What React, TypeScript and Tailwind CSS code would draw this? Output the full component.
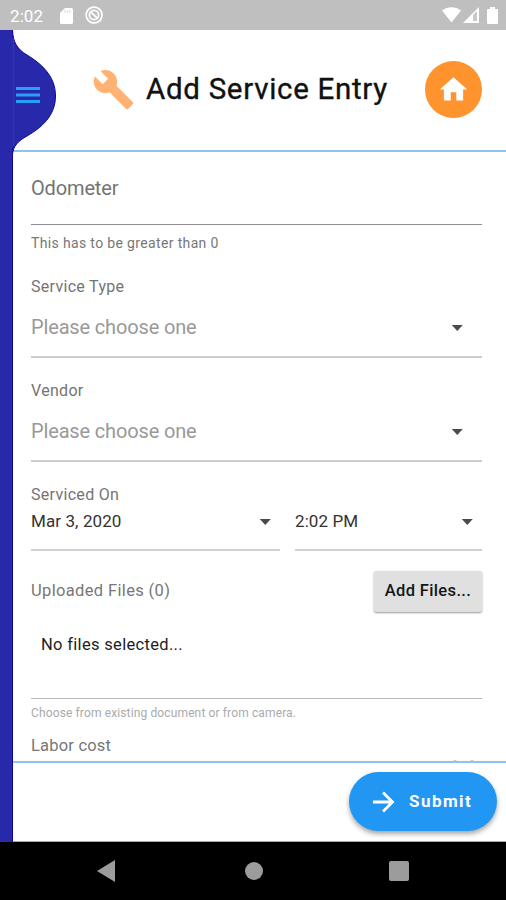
import type { ReactNode } from "react";
import { MdBuild, MdHome } from "react-icons/md";

function Caret({ className = "" }: { className?: string }) {
  return (
    <svg className={className} width="12" height="6" viewBox="0 0 12 6">
      <path d="M.8 0h11L6.300 6z" fill="#4a4a4a" />
    </svg>
  );
}

function StatusBar() {
  return (
    <div className="flex h-[30px] shrink-0 items-center bg-[#bfbfbf] pl-[10px] pr-2 text-white">
      <span className="w-[50px] text-[17px] leading-[30px] tracking-[0.1px] pt-[2px]">2:02</span>
      <svg width="13" height="16" viewBox="0 0 13 16" className="mt-px">
        <path
          d="M5 0h6.5A1.5 1.5 0 0 1 13 1.500v13A1.500 1.500 0 0 1 11.500 16h-10A1.500 1.500 0 0 1 0 14.500V5z"
          fill="#fff"
        />
        <path d="M5 2v3M7.500 2v3M10 2v3" stroke="#e2e2e2" strokeWidth="1.200" />
      </svg>
      <svg width="18" height="18" viewBox="0 0 18 18" className="ml-3" fill="none" stroke="#fff">
        <path d="M14.500 14.800A7.900 7.900 0 1 1 17 9c0 2-.6 3.500-2 6z" strokeWidth="1.700" />
        <circle cx="9" cy="9" r="4.600" strokeWidth="1.700" />
        <path d="M5.800 5.800l6.400 6.400" strokeWidth="1.800" />
      </svg>
      <div className="ml-auto flex items-center">
        <svg width="19" height="16" viewBox="0 0 19 16">
          <path d="M0 3.500C5.500-1 13.500-1 19 3.500L9.500 15.500z" fill="#fff" />
        </svg>
        <svg width="16" height="16" viewBox="0 0 16 16" className="ml-[2px]">
          <path d="M0 16L16 0v16z" fill="#fff" />
          <path d="M10 8l4-4v10h-4z" fill="#c9c9c9" />
        </svg>
        <svg width="11" height="17" viewBox="0 0 11 17" className="ml-2">
          <path d="M3 0h5v2h2a1 1 0 0 1 1 1v13a1 1 0 0 1-1 1H1a1 1 0 0 1-1-1V3a1 1 0 0 1 1-1h2z" fill="#fff" />
        </svg>
      </div>
    </div>
  );
}

function DrawerHandle() {
  return (
    <div className="relative z-10 w-[13px] shrink-0 border-r border-[#0a0a9c] bg-[#2729aa]">
      <svg className="absolute left-0 top-0" width="58" height="124" viewBox="0 0 58 124">
        <path
          d="M12.500 0C13 12 17 19 27 25C40 33 55.500 45 55.500 66C55.500 86 41 98 27 106C18 111 13.500 116 12.500 124z"
          fill="#2729aa"
        />
        <path
          d="M12.500 0C13 12 17 19 27 25C40 33 55.500 45 55.500 66C55.500 86 41 98 27 106C18 111 13.500 116 12.500 124"
          fill="none"
          stroke="#0a0a9c"
          strokeWidth="1"
        />
        <path d="M13 8v108" stroke="#4142b4" strokeWidth="1" />
        <path d="M16 58.500h24M16 65h24M16 71.500h24" stroke="#28a0fa" strokeWidth="2.800" />
      </svg>
    </div>
  );
}

function SelectField({ label, children }: { label: string; children: ReactNode }) {
  return (
    <div className="flex h-[104px] flex-col border-b-2 border-[#cdcdcd]">
      <div className="mt-[23px] text-[16px] leading-[20px] tracking-[0.3px] text-[#747474]">{label}</div>
      <div className="mt-[18px] flex items-center justify-between pr-[19px] text-[20px] leading-[24px] tracking-[-0.15px] text-[#999]">
        {children}
        <Caret className="mt-px" />
      </div>
    </div>
  );
}

export default function App() {
  return (
    <div className="flex h-[900px] w-[506px] flex-col overflow-hidden bg-white font-['Roboto',sans-serif]">
      <StatusBar />
      <div className="flex h-[812px] shrink-0">
        <DrawerHandle />
        <div className="flex w-[493px] flex-col">
          <header className="flex h-[122px] shrink-0 items-center border-b-2 border-[#94c1ec] pl-[79px] pr-[24px] pb-[2px]">
            <MdBuild className="size-[43px] text-[#ffb274]" />
            <h1 className="ml-[11px] whitespace-nowrap text-[29.500px] leading-9 tracking-[0.7px] text-[#111] [-webkit-text-stroke:0.35px_#111]">
              Add Service Entry
            </h1>
            <div className="ml-auto flex size-[57px] items-center justify-center rounded-full bg-[#ff932d]">
              <MdHome className="size-[33px] text-white" />
            </div>
          </header>

          <main className="h-[609px] shrink-0 overflow-hidden pl-[18px] pr-[24px]">
            <div className="h-[73px] border-b border-[#8f8f8f] pt-[24px] text-[20px] leading-[24px] tracking-[-0.15px] text-[#747474]">
              Odometer
            </div>
            <div className="h-[28px] pt-[9px] text-[14px] leading-[18px] tracking-[0.350px] text-[#777]">
              This has to be greater than 0
            </div>
            <div className="pt-px">
              <SelectField label="Service Type">Please choose one</SelectField>
              <SelectField label="Vendor">Please choose one</SelectField>
            </div>
            <div className="pt-[23px] text-[16px] leading-[20px] tracking-[0.3px] text-[#747474]">Serviced On</div>
            <div className="flex gap-[15px] text-[17px] leading-[20px] tracking-[0.1px] text-[#333]">
              <div className="flex h-[46px] w-[249px] items-start justify-between border-b-2 border-[#d0d0d0] pr-[9px] pt-[6px]">
                Mar 3, 2020
                <Caret className="mt-[8px]" />
              </div>
              <div className="flex h-[46px] flex-1 items-start justify-between border-b-2 border-[#d0d0d0] pr-[9px] pt-[6px]">
                2:02 PM
                <Caret className="mt-[8px]" />
              </div>
            </div>
            <div className="mt-[19px] flex h-[42px] items-center justify-between">
              <span className="text-[16.500px] tracking-[0.350px] text-[#777]">Uploaded Files (0)</span>
              <button className="h-[41px] w-[108px] rounded-[2px] bg-[#e0e0e0] text-[16.500px] font-medium tracking-[0.350px] text-[#161616] shadow-[0_1px_2px_rgba(0,0,0,0.4)]">
                Add Files...
              </button>
            </div>
            <div className="h-[87px] border-b border-[#b8b8b8] pl-[10px] pt-[22px] text-[16.500px] leading-[22px] tracking-[0.320px] text-[#1e1e1e]">
              No files selected...
            </div>
            <div className="pt-[6px] text-[12px] leading-[16px] tracking-[0.130px] text-[#aaa]">
              Choose from existing document or from camera.
            </div>
            <div className="flex justify-between pt-[14px] text-[16.500px] leading-[22px] tracking-[0.2px] text-[#777]">
              Labor cost
              <div className="mr-[8px] mt-[25px] flex gap-[13px]">
                <span className="h-[3px] w-[4px] rounded-t-full bg-[#c5c5c5]" />
                <span className="h-[3px] w-[4px] rounded-t-full bg-[#c5c5c5]" />
              </div>
            </div>
          </main>

          <footer className="flex h-[81px] shrink-0 items-start justify-end border-b border-t-2 border-b-[#aaa] border-t-[#94c1ec] pr-[9px] pt-[9px]">
            <button className="flex h-[59px] w-[148px] items-center rounded-full bg-[#2196f3] pl-[24px] text-white shadow-[0_3px_5px_rgba(0,0,0,0.35)]">
              <svg width="22" height="22" viewBox="0 0 22 22" fill="none" stroke="#fff" strokeWidth="2.800">
                <path d="M0 11h19M10 1.500l9.500 9.500L10 20.500" />
              </svg>
              <span className="ml-[14px] text-[17px] font-bold tracking-[1.450px]">Submit</span>
            </button>
          </footer>
        </div>
      </div>
      <nav className="flex h-[58px] shrink-0 items-center bg-black pl-[97px]">
        <svg width="18" height="22" viewBox="0 0 18 22">
          <path d="M0 11L18 0v22z" fill="#9c9c9c" />
        </svg>
        <div className="ml-[130px] size-[18px] rounded-full bg-[#9c9c9c]" />
        <div className="ml-[126px] size-[20px] rounded-[2px] bg-[#9c9c9c]" />
      </nav>
    </div>
  );
}
